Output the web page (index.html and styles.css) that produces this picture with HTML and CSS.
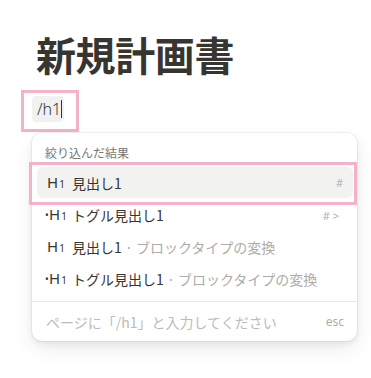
FILE: index.html
```html
<!DOCTYPE html>
<html lang="ja">
<head>
<meta charset="utf-8">
<link rel="stylesheet" href="styles.css">
</head>
<body>
<div class="page">
  <h1 class="title">新規計画書</h1>
  <div class="mark mark-input">
    <div class="chip">/h1<span class="caret"></span></div>
  </div>
  <div class="menu">
    <div class="menu-head">絞り込んだ結果</div>
    <div class="rows">
      <div class="row active">
        <span class="ico"><span class="hh">H<span class="sub">1</span></span></span>
        <span class="label">見出し1</span>
        <span class="key">#</span>
      </div>
      <div class="row">
        <span class="ico"><span class="dot">•</span><span class="hh">H<span class="sub">1</span></span></span>
        <span class="label">トグル見出し1</span>
        <span class="key key-wide">#&nbsp;&gt;</span>
      </div>
      <div class="row">
        <span class="ico"><span class="hh">H<span class="sub">1</span></span></span>
        <span class="label">見出し1<span class="muted"> · ブロックタイプの変換</span></span>
      </div>
      <div class="row">
        <span class="ico"><span class="dot">•</span><span class="hh">H<span class="sub">1</span></span></span>
        <span class="label">トグル見出し1<span class="muted"> · ブロックタイプの変換</span></span>
      </div>
    </div>
    <div class="menu-foot">
      <span class="hint">ページに「/h1」と入力してください</span>
      <span class="esc">esc</span>
    </div>
  </div>
</div>
</body>
</html>
```

FILE: styles.css
```css
html, body {
  margin: 0;
  padding: 0;
  background: #ffffff;
}
body {
  font-family: "Noto Sans", "Noto Sans CJK JP", sans-serif;
  color: #37352f;
}
.page {
  width: 371px;
  height: 378px;
  padding-top: 30px;
  box-sizing: border-box;
}
.title {
  margin: 0 0 0 36px;
  font-family: "Noto Sans CJK JP", sans-serif;
  font-weight: 700;
  font-size: 40px;
  line-height: 48px;
  letter-spacing: -0.4px;
  color: #37352f;
}
.mark {
  border: 3px solid #f4b2ca;
  box-sizing: border-box;
}
.mark-input {
  margin: 12px 0 0 21px;
  width: 58px;
  height: 42px;
  padding: 3px 0 0 8px;
}
.chip {
  width: 32px;
  height: 26px;
  box-sizing: border-box;
  padding-left: 5px;
  background: #f1f1ef;
  border-radius: 4px;
  font-size: 16px;
  font-weight: 300;
  line-height: 26px;
  color: #37352f;
  display: flex;
  align-items: center;
}
.caret {
  display: inline-block;
  width: 1px;
  height: 18px;
  background: #37352f;
  margin-left: 0;
}
.menu {
  margin: 1px 0 0 32px;
  width: 325px;
  height: 208px;
  box-sizing: border-box;
  border-radius: 10px;
  background: #fff;
  box-shadow: 0 0 0 1px rgba(15, 15, 15, 0.05), 0 3px 6px rgba(15, 15, 15, 0.06), 0 8px 20px rgba(15, 15, 15, 0.08);
  display: flex;
  flex-direction: column;
}
.menu-head {
  height: 34px;
  box-sizing: border-box;
  padding: 12px 0 0 13px;
  font-family: "Noto Sans CJK JP", sans-serif;
  font-size: 12px;
  line-height: 16px;
  color: #787774;
}
.rows {
  padding: 0 4px 6px 5px;
}
.row {
  position: relative;
  height: 32px;
  border-radius: 6px;
  display: flex;
  align-items: center;
  padding: 0 10px 0 9px;
  font-size: 14px;
}
.row.active {
  background: #f2f2f1;
  height: 31px;
  margin-bottom: 1px;
}
.row.active::after {
  content: "";
  position: absolute;
  left: -8px;
  top: -5px;
  right: -4px;
  bottom: -7px;
  border: 3px solid #f4b2ca;
}
.ico {
  width: 26px;
  flex: none;
  display: flex;
  align-items: center;
  color: #37352f;
}
.dot {
  font-size: 10px;
  width: 2px;
  margin-left: -1px;
  margin-right: 1px;
}
.hh {
  font-family: "Noto Sans", sans-serif;
  font-size: 15px;
  font-weight: 400;
  line-height: 20px;
  padding-left: 1px;
  color: #37352f;
}
.sub {
  font-size: 10px;
  margin-left: 1px;
}
.label {
  flex: 1;
  font-family: "Noto Sans CJK JP", sans-serif;
  font-size: 14px;
  line-height: 20px;
  color: #37352f;
  white-space: nowrap;
}
.muted {
  color: #adaca8;
}
.key {
  font-size: 11px;
  color: #b0afab;
}
.key-wide {
  margin-right: 4px;
}
.menu-foot {
  border-top: 1px solid #e9e9e7;
  flex: 1;
  display: flex;
  align-items: center;
  padding: 0 13px 0 14px;
}
.hint {
  flex: 1;
  font-family: "Noto Sans CJK JP", sans-serif;
  font-size: 14px;
  color: #bcbbb8;
}
.esc {
  font-size: 12px;
  color: #aeada9;
}
```
